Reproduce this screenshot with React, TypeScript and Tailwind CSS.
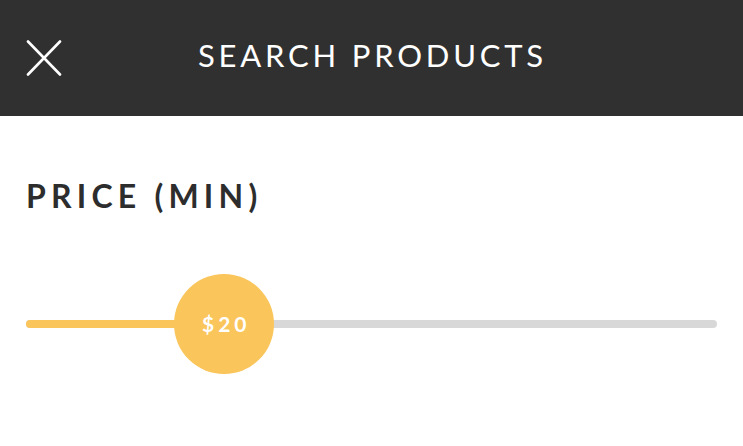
export default function App() {
  const pct = 198 / 690;
  return (
    <div className="w-[743px] h-[446px] bg-white font-['Lato',sans-serif]">
      <header className="h-[116px] bg-[#303030] flex items-center px-[26px] relative">
        <button className="w-[36px] h-[36px] text-white">
          <svg viewBox="0 0 36 36" width="36" height="36" fill="none" stroke="currentColor" strokeWidth="2.6" strokeLinecap="round">
            <path d="M2 1.5 L34 34.5 M34 1.5 L2 34.5" />
          </svg>
        </button>
        <h1 className="flex-1 text-center text-white text-[31px] font-normal tracking-[3.8px] pr-[36px] ml-[2px] mt-[-6px]">
          SEARCH PRODUCTS
        </h1>
      </header>
      <section className="px-[26px] pt-[60px]">
        <h2 className="text-[#2d2d2d] text-[32px] font-bold tracking-[5.2px] leading-[40px]">PRICE (MIN)</h2>
        <div className="relative mt-[104px] h-[8px] rounded-full bg-[#d8d8d8]">
          <div className="absolute left-0 top-0 h-full rounded-full bg-[#fac55a]" style={{ width: `${pct * 100}%` }} />
          <div
            className="absolute top-1/2 -translate-x-1/2 -translate-y-1/2 w-[100px] h-[100px] rounded-full bg-[#fac55a] flex items-center justify-center"
            style={{ left: `${pct * 100}%` }}
          >
            <span className="text-white text-[21px] font-bold tracking-[4px] pl-[4px]">$20</span>
          </div>
        </div>
      </section>
    </div>
  );
}
